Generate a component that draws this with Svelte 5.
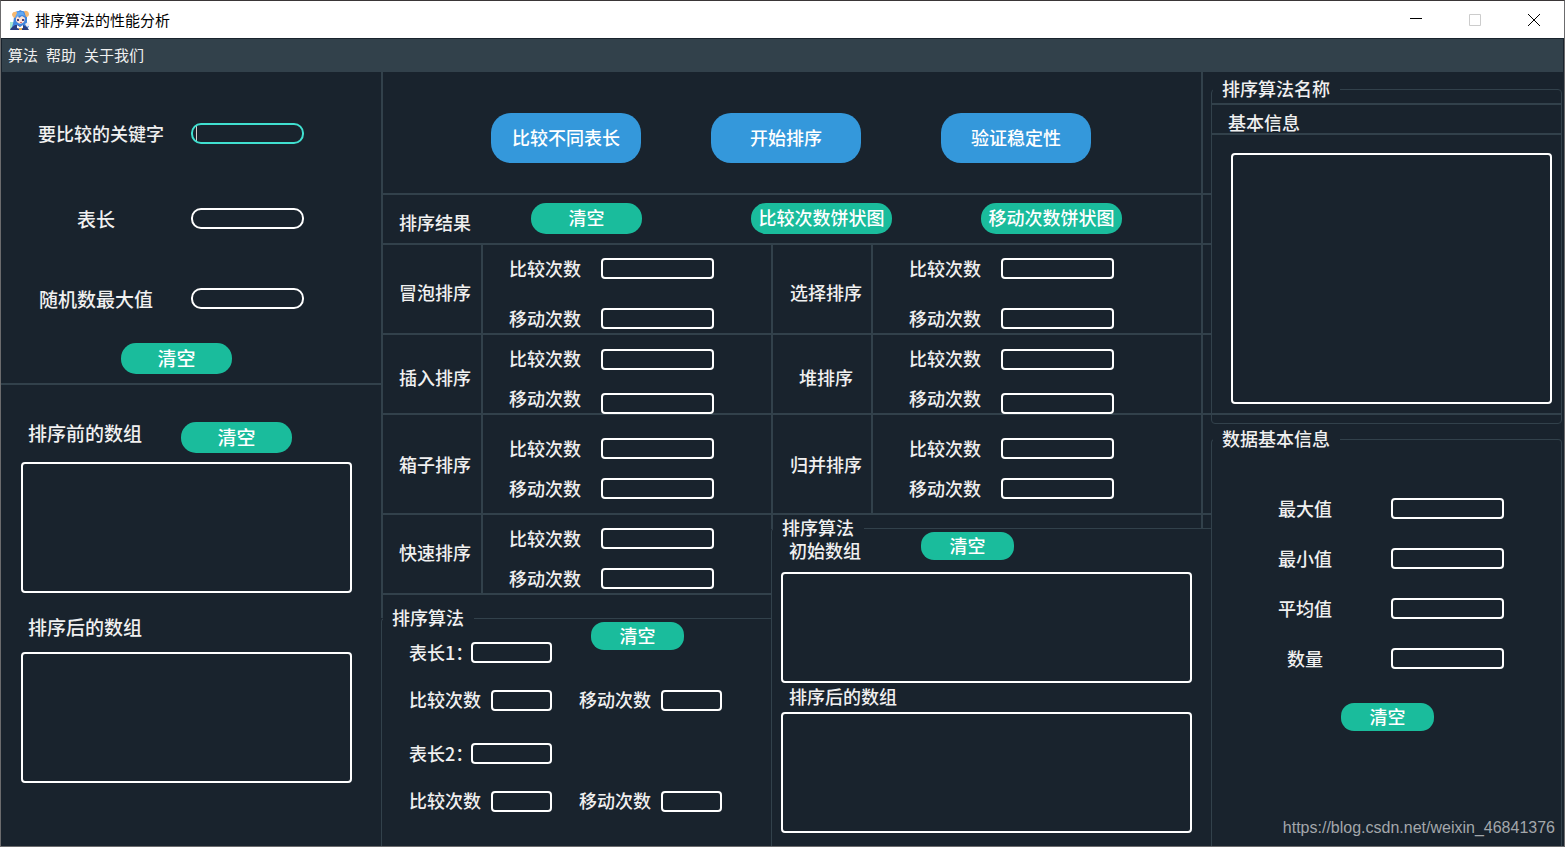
<script>
  const leftSorts = [
    { id: 'bubble', name: '冒泡排序', size: 'r1' },
    { id: 'insert', name: '插入排序', size: 'r2' },
    { id: 'bucket', name: '箱子排序', size: 'r3' },
    { id: 'quick', name: '快速排序', size: 'r4' }
  ];
  const rightSorts = [
    { id: 'select', name: '选择排序', size: 'r1' },
    { id: 'heap', name: '堆排序', size: 'r2' },
    { id: 'merge', name: '归并排序', size: 'r3' }
  ];
  const stats = [
    { id: 'max', name: '最大值' },
    { id: 'min', name: '最小值' },
    { id: 'avg', name: '平均值' },
    { id: 'count', name: '数量' }
  ];
</script>

{#snippet sortRow(sort)}
  <div class="sort {sort.size}">
    <div class="name">{sort.name}</div>
    <div class="metrics">
      <div class="labels">
        <label for="{sort.id}-cmp">比较次数</label>
        <label for="{sort.id}-mov">移动次数</label>
      </div>
      <div class="fields">
        <input id="{sort.id}-cmp" type="text" />
        <input id="{sort.id}-mov" type="text" />
      </div>
    </div>
  </div>
{/snippet}

{#snippet lengthBlock(n)}
  <div class="counts">
    <label for="cmp{n}">比较次数</label>
    <input id="cmp{n}" type="text" />
    <label for="mov{n}">移动次数</label>
    <input id="mov{n}" type="text" />
  </div>
{/snippet}

<div class="window">
  <header class="titlebar">
    <svg class="avatar" viewBox="0 0 20 20" aria-hidden="true">
      <path d="M0 12h5v8H0z" fill="#a5e8d4" />
      <path d="M4 4Q5 1 9 1L10 0L12 1Q16 1 17 6L17 13L19 17Q15 20 10 20Q4 20 2 17Q4 12 4 4z" fill="#4285dc" />
      <path d="M6 3Q9 1 13 2L15 6L12 5L8 6L5 8z" fill="#62a8f2" />
      <path d="M2 4Q3 1 7 2Q7 4 6 5L5 8Q2 7 2 4z" fill="#f6b870" />
      <path d="M14 1Q18 0 19 4Q19 7 16 7L15 4z" fill="#f6b870" />
      <path d="M6 8L8 6L9 8L12 6L15 8L14 12Q11 15 8 13L6 11z" fill="#fde3d8" />
      <path d="M7 9h2v2H7zM12 9h2v2h-2z" fill="#4d4278" />
      <path d="M10 12h2v1h-2z" fill="#d66a70" />
      <path d="M1 18L5 15L8 15L10 17L13 15L17 17L19 20H0z" fill="#2b3f80" />
      <path d="M7 15L10 17L13 15L13 18L10 19L7 18z" fill="#fff" />
      <path d="M15 14L18 12L20 15L17 17z" fill="#f4eeee" />
      <path d="M9 18h3v2H9z" fill="#f2b552" />
    </svg>
    <h1>排序算法的性能分析</h1>
    <div class="controls">
      <button type="button" aria-label="最小化"><svg viewBox="0 0 12 12"><path d="M0 4.5h12" stroke="#000" /></svg></button>
      <button type="button" aria-label="最大化" disabled><svg viewBox="0 0 12 12"><path d="M.5.5h11v11H.5z" stroke="#ccc" fill="none" /></svg></button>
      <button type="button" aria-label="关闭"><svg viewBox="0 0 12 12"><path d="M0 0L12 12M12 0L0 12" stroke="#000" /></svg></button>
    </div>
  </header>

  <nav class="menubar">
    <button type="button">算法</button>
    <button type="button">帮助</button>
    <button type="button">关于我们</button>
  </nav>

  <main>
    <section class="left">
      <form class="params">
        <div class="param"><label class="key" for="key">要比较的关键字</label><input id="key" class="pill active" type="text" /></div>
        <div class="param"><label for="len">表长</label><input id="len" class="pill" type="text" /></div>
        <div class="param"><label for="rand">随机数最大值</label><input id="rand" class="pill" type="text" /></div>
        <button type="button" class="green wide">清空</button>
      </form>
      <div class="arrays">
        <div class="before">
          <label for="before">排序前的数组</label>
          <button type="button" class="green wide">清空</button>
        </div>
        <textarea id="before"></textarea>
        <label class="after" for="after">排序后的数组</label>
        <textarea id="after"></textarea>
      </div>
    </section>

    <section class="middle">
      <div class="band">
        <div class="actions">
          <button type="button" class="blue">比较不同表长</button>
          <button type="button" class="blue">开始排序</button>
          <button type="button" class="blue">验证稳定性</button>
        </div>
      </div>
      <div class="band">
        <div class="results">
          <h2>排序结果</h2>
          <button type="button" class="green mid">清空</button>
          <button type="button" class="green chart">比较次数饼状图</button>
          <button type="button" class="green chart">移动次数饼状图</button>
        </div>
      </div>
      <div class="halves">
        <div class="half">
          {#each leftSorts as sort (sort.id)}
            {@render sortRow(sort)}
          {/each}
          <div class="spacer tall"></div>
          <fieldset class="group lengths">
            <legend>排序算法</legend>
            <div class="length first">
              <label for="len1">表长1：</label>
              <input id="len1" type="text" />
              <button type="button" class="green small">清空</button>
            </div>
            {@render lengthBlock(1)}
            <div class="length second">
              <label for="len2">表长2：</label>
              <input id="len2" type="text" />
            </div>
            {@render lengthBlock(2)}
          </fieldset>
        </div>
        <div class="half right-half">
          {#each rightSorts as sort (sort.id)}
            {@render sortRow(sort)}
          {/each}
          <div class="spacer"><div class="rail"></div></div>
          <fieldset class="group stability">
            <legend>排序算法</legend>
            <div class="initial">
              <label for="initial">初始数组</label>
              <button type="button" class="green small">清空</button>
            </div>
            <textarea id="initial"></textarea>
            <label class="sorted" for="sorted">排序后的数组</label>
            <textarea id="sorted"></textarea>
          </fieldset>
        </div>
      </div>
    </section>

    <aside class="right">
      <fieldset class="group info">
        <legend>排序算法名称</legend>
        <label for="info">基本信息</label>
        <div class="info-body"><textarea id="info"></textarea></div>
      </fieldset>
      <fieldset class="group data">
        <legend>数据基本信息</legend>
        {#each stats as stat (stat.id)}
          <div class="stat">
            <label for={stat.id}>{stat.name}</label>
            <input id={stat.id} type="text" />
          </div>
        {/each}
        <button type="button" class="green small">清空</button>
      </fieldset>
    </aside>
  </main>
  <div class="watermark">https://blog.csdn.net/weixin_46841376</div>
</div>

<style>
  :global(body) {
    margin: 0;
    background: #19232d;
  }
  .window {
    --bg: #19232d;
    --line: #32414b;
    position: relative;
    display: flex;
    flex-direction: column;
    box-sizing: border-box;
    min-height: 100vh;
    border: 1px solid #6b6b6d;
    border-top-color: #3a3637;
    background: var(--bg);
    color: #f0f0f0;
    font: 500 18px/21px 'Noto Sans CJK SC', sans-serif;
  }
  .window :global(*) {
    box-sizing: border-box;
  }
  h1,
  h2 {
    margin: 0;
    font: inherit;
  }
  button,
  input,
  textarea {
    display: block;
    margin: 0;
    padding: 0;
    font: inherit;
    color: inherit;
  }
  button {
    border: 0;
    background: none;
    white-space: nowrap;
  }
  label,
  h2,
  legend,
  .name {
    white-space: nowrap;
  }
  input,
  textarea {
    border: 2px solid #fff;
    border-radius: 4px;
    background: transparent;
    outline: none;
  }
  input {
    width: 113px;
    height: 21px;
  }
  textarea {
    width: 100%;
    resize: none;
  }
  .pill {
    border-radius: 10px;
  }
  .active {
    border-color: #40e0d0;
    background: linear-gradient(#d8cfcb, #d8cfcb) 3px 1px / 1px 15px no-repeat;
  }
  .green,
  .blue {
    padding-bottom: 2px;
    color: #fff;
  }
  .green {
    background: #1abc9c;
    border-radius: 15px;
  }
  .blue {
    width: 150px;
    height: 50px;
    border-radius: 20px;
    background: #3498db;
  }
  .wide,
  .mid {
    width: 111px;
    height: 31px;
  }
  .wide {
    font-size: 19px;
  }
  .chart {
    width: 141px;
    height: 31px;
  }
  .small {
    width: 93px;
    height: 28px;
    border-radius: 13px;
  }

  .titlebar {
    display: flex;
    align-items: center;
    height: 37px;
    padding: 0 1px 0 9px;
    background: #fff;
    color: #000;
    font-size: 15px;
    font-weight: 400;
  }
  .avatar {
    width: 20px;
    height: 20px;
    margin-right: 5px;
  }
  .controls {
    display: flex;
    height: 100%;
    margin-left: auto;
  }
  .controls button {
    display: grid;
    place-items: center;
    width: 59px;
  }
  .controls svg {
    width: 12px;
    height: 12px;
  }
  .menubar {
    display: flex;
    align-items: center;
    gap: 8px;
    height: 33px;
    margin: 1px 1px 0;
    padding: 0 6px 2px;
    background: var(--line);
    font-size: 15px;
    font-weight: 400;
  }

  main {
    flex: 1;
    display: grid;
    grid-template-columns: 380fr 830fr 353fr;
  }
  .left {
    display: flex;
    flex-direction: column;
    font-size: 19px;
  }
  .params {
    padding: 51px 0 9px;
    border-bottom: 2px solid var(--line);
  }
  .param {
    display: grid;
    grid-template-columns: 190px auto;
    align-items: center;
    margin-bottom: 64px;
  }
  .param + .param {
    margin-bottom: 59px;
  }
  .param + .param + .param {
    margin-bottom: 34px;
  }
  .param label {
    justify-self: start;
    min-width: 116px;
    margin-left: 37px;
    text-align: center;
  }
  .param .key {
    font-size: 18px;
  }
  .params .wide {
    margin-left: 120px;
  }
  .arrays {
    padding: 37px 29px 0 20px;
  }
  .arrays label {
    padding-left: 7px;
  }
  .arrays textarea {
    height: 131px;
  }
  .before {
    display: grid;
    grid-template-columns: 160px auto;
    margin-bottom: 9px;
  }
  .arrays .after {
    display: block;
    margin: 23px 0 15px;
  }

  .middle {
    display: flex;
    flex-direction: column;
    min-width: 0;
  }
  .band {
    padding-right: 8px;
    border-left: 2px solid var(--line);
    border-bottom: 2px solid var(--line);
  }
  .actions,
  .results {
    display: grid;
    border-right: 2px solid var(--line);
  }
  .actions {
    grid-template-columns: 220fr 230fr 260fr;
    padding: 41px 0 30px 108px;
  }
  .results {
    grid-template-columns: 132fr 220fr 230fr 220fr;
    padding: 8px 0 9px 16px;
  }
  .results h2 {
    padding-top: 9px;
  }
  .halves {
    flex: 1;
    display: grid;
    grid-template-columns: 390fr 440fr;
  }
  .half {
    display: flex;
    flex-direction: column;
  }
  .sort {
    display: grid;
    grid-template-columns: 100px 1fr;
    border-left: 2px solid var(--line);
    border-bottom: 2px solid var(--line);
  }
  .name {
    display: grid;
    place-items: center;
    padding-left: 6px;
    border-right: 2px solid var(--line);
  }
  .r1 .name,
  .r2 .name {
    padding-top: 6px;
  }
  .r4 .name {
    padding-bottom: 3px;
  }
  .metrics {
    display: grid;
    grid-template-columns: 92px auto;
    padding-left: 26px;
  }
  .labels,
  .fields {
    display: flex;
    flex-direction: column;
    gap: 19px;
  }
  .right-half .sort {
    padding-right: 8px;
  }
  .right-half .name {
    padding-left: 8px;
  }
  .right-half .metrics {
    padding-left: 36px;
    grid-template-columns: 92px 1fr;
    border-right: 2px solid var(--line);
  }
  .r1 .metrics {
    padding-top: 13px;
    padding-bottom: 4px;
  }
  .r1 .labels,
  .r1 .fields {
    gap: 29px;
  }
  .r2 .metrics {
    padding-top: 13px;
  }
  .r2 .fields {
    margin-bottom: -1px;
    padding-top: 1px;
    gap: 23px;
  }
  .r3 .metrics {
    padding-top: 23px;
    padding-bottom: 14px;
  }
  .r4 .metrics {
    padding-top: 13px;
    padding-bottom: 4px;
  }
  .spacer {
    height: 14px;
    padding-right: 8px;
    border-left: 2px solid var(--line);
  }
  .tall {
    height: 23px;
  }
  .rail {
    height: 100%;
    border-right: 2px solid var(--line);
  }

  .group {
    position: relative;
    min-width: 0;
    margin: 0;
    padding: 0;
    border: 1px solid var(--line);
    border-radius: 4px;
  }
  legend {
    position: absolute;
    top: -12px;
    left: 1px;
    padding: 0 10px 0 9px;
    background: var(--bg);
  }
  .lengths,
  .stability,
  .data {
    flex: 1;
    border-bottom: 0;
    border-bottom-left-radius: 0;
    border-bottom-right-radius: 0;
  }
  .lengths {
    padding: 3px 0 0 27px;
    border-right: 0;
    border-radius: 4px 0 0 0;
  }
  .length,
  .counts {
    display: flex;
    align-items: flex-end;
  }
  .length label {
    width: 62px;
  }
  .length input {
    width: 81px;
  }
  .length .small {
    align-self: flex-start;
    margin-left: 39px;
  }
  .first {
    height: 41px;
  }
  .second {
    margin-top: 32px;
  }
  .counts {
    margin-top: 26px;
  }
  .counts label {
    width: 82px;
    padding-bottom: 1px;
  }
  .counts input {
    width: 61px;
  }
  .counts input + label {
    margin-left: 27px;
  }
  .stability {
    padding: 3px 19px 0 9px;
    border-right: 0;
    border-top-right-radius: 0;
  }
  .initial {
    display: grid;
    grid-template-columns: 140px auto;
    align-items: start;
    height: 40px;
  }
  .initial label,
  .stability .sorted {
    padding-left: 8px;
  }
  .initial label {
    padding-top: 8px;
  }
  #initial {
    height: 111px;
  }
  .stability .sorted {
    display: block;
    margin: 3px 0 5px;
  }
  #sorted {
    height: 121px;
  }
  .stability .small {
    margin-top: 0;
  }
  .right-half .spacer {
    margin-bottom: -1px;
  }

  .right {
    display: flex;
    flex-direction: column;
    padding: 17px 2px 0 0;
  }
  .info {
    margin-bottom: 15px;
    padding: 13px 0 8px;
  }
  .info label {
    display: block;
    padding: 7px 0 1px 16px;
    border: solid var(--line);
    border-width: 2px 0;
    line-height: 20px;
  }
  .info-body {
    padding: 18px 9px 9px 19px;
    border-bottom: 2px solid var(--line);
  }
  .info-body textarea {
    height: 251px;
  }
  .data {
    padding-top: 58px;
  }
  .stat {
    display: grid;
    grid-template-columns: 120px auto;
    margin-bottom: 29px;
    padding-left: 59px;
  }
  .stat label {
    width: 68px;
    text-align: center;
  }
  .data .small {
    margin: 34px 0 0 129px;
  }
  .watermark {
    position: absolute;
    right: 9px;
    bottom: 8px;
    color: #a3a7ab;
    font: 16px/20px 'Liberation Sans', Arial, sans-serif;
  }
</style>
